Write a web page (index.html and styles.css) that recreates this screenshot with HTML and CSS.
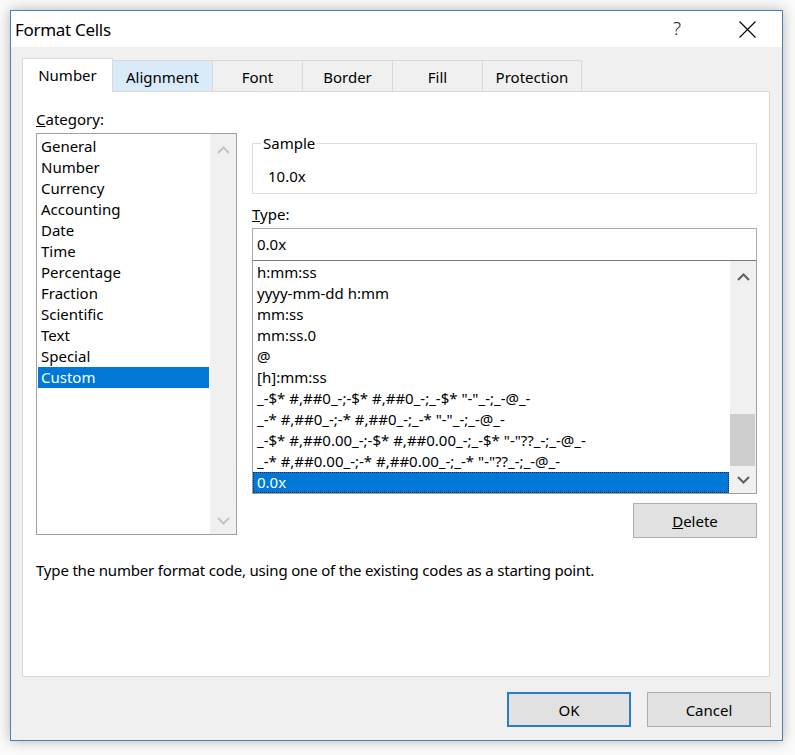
FILE: index.html
```html
<!DOCTYPE html>
<html>
<head>
<meta charset="utf-8">
<link rel="stylesheet" href="styles.css">
</head>
<body>
<div class="window">
  <div class="titlebar">
    <span class="title">Format Cells</span>
    <span class="help">?</span>
    <svg class="close" width="17" height="17" viewBox="0 0 17 17"><path d="M0.5 0.5 L16.5 16.5 M16.5 0.5 L0.5 16.5" stroke="#000" stroke-width="1.1" fill="none"/></svg>
  </div>
  <div class="body">
    <div class="tabs">
      <div class="tab selected w91">Number</div>
      <div class="tab hover w100">Alignment</div>
      <div class="tab w90">Font</div>
      <div class="tab w90">Border</div>
      <div class="tab w90">Fill</div>
      <div class="tab w99">Protection</div>
    </div>
    <div class="panel">
      <div class="toprow">
        <div class="leftcol">
          <div class="label"><u>C</u>ategory:</div>
          <div class="listbox catlist">
            <div class="items">
              <div class="row">General</div>
              <div class="row">Number</div>
              <div class="row">Currency</div>
              <div class="row">Accounting</div>
              <div class="row">Date</div>
              <div class="row">Time</div>
              <div class="row">Percentage</div>
              <div class="row">Fraction</div>
              <div class="row">Scientific</div>
              <div class="row">Text</div>
              <div class="row">Special</div>
              <div class="row sel">Custom</div>
            </div>
            <div class="scrollbar disabled">
              <div class="sbtn up"><svg width="13" height="8" viewBox="0 0 13 8"><path d="M1 7 L6.5 1.5 L12 7" /></svg></div>
              <div class="track"></div>
              <div class="sbtn down"><svg width="13" height="8" viewBox="0 0 13 8"><path d="M1 1 L6.5 6.5 L12 1" /></svg></div>
            </div>
          </div>
        </div>
        <div class="rightcol">
          <fieldset class="sample">
            <legend>Sample</legend>
            <div class="sampletext">10.0x</div>
          </fieldset>
          <div class="label typelabel"><u>T</u>ype:</div>
          <div class="input">0.0x</div>
          <div class="listbox typelist">
            <div class="items">
              <div class="row">h:mm:ss</div>
              <div class="row">yyyy-mm-dd h:mm</div>
              <div class="row">mm:ss</div>
              <div class="row">mm:ss.0</div>
              <div class="row">@</div>
              <div class="row">[h]:mm:ss</div>
              <div class="row">_-$* #,##0_-;-$* #,##0_-;_-$* "-"_-;_-@_-</div>
              <div class="row">_-* #,##0_-;-* #,##0_-;_-* "-"_-;_-@_-</div>
              <div class="row">_-$* #,##0.00_-;-$* #,##0.00_-;_-$* "-"??_-;_-@_-</div>
              <div class="row">_-* #,##0.00_-;-* #,##0.00_-;_-* "-"??_-;_-@_-</div>
              <div class="row sel focus">0.0x</div>
            </div>
            <div class="scrollbar">
              <div class="sbtn up"><svg width="13" height="8" viewBox="0 0 13 8"><path d="M1 7 L6.5 1.5 L12 7" /></svg></div>
              <div class="track"><div class="thumb"></div></div>
              <div class="sbtn down"><svg width="13" height="8" viewBox="0 0 13 8"><path d="M1 1 L6.5 6.5 L12 1" /></svg></div>
            </div>
          </div>
          <div class="btnrow">
            <div class="button delete"><u>D</u>elete</div>
          </div>
        </div>
      </div>
      <div class="desc">Type the number format code, using one of the existing codes as a starting point.</div>
    </div>
    <div class="footer">
      <div class="button ok">OK</div>
      <div class="button">Cancel</div>
    </div>
  </div>
</div>
</body>
</html>
```

FILE: styles.css
```css
* { box-sizing: border-box; }
html, body { margin: 0; padding: 0; background: #fafafa; }
body {
  font-family: "Noto Sans", "Open Sans", sans-serif;
  font-size: 15px;
  color: #000;
  width: 795px;
  height: 755px;
  overflow: hidden;
}
.window {
  margin: 10px 0 0 10px;
  width: 773px;
  height: 731px;
  border: 1px solid #4f7fad;
  background: #f0f0f0;
  box-shadow: 0 0 12px rgba(0,0,0,0.28);
  display: flex;
  flex-direction: column;
}
.titlebar {
  height: 36px;
  background: #fff;
  display: flex;
  align-items: center;
  padding-left: 4px;
}
.title { font-size: 17px; flex: 1; letter-spacing: -0.3px; padding-top: 1px; }
.help { font-size: 19px; font-weight: 300; color: #222; margin-right: 58px; margin-top: -2px; }
.close { margin-right: 26px; }
.body {
  flex: 1;
  padding: 11px 12px 0 11px;
  display: flex;
  flex-direction: column;
}
.tabs {
  display: flex;
  align-items: flex-end;
  height: 33px;
  position: relative;
  z-index: 2;
}
.tab {
  height: 31px;
  border-top: 1px solid #d9d9d9;
  border-right: 1px solid #d9d9d9;
  display: flex;
  align-items: center;
  justify-content: center;
  background: #f0f0f0;
  padding-top: 2px;
}
.tab.selected {
  height: 34px;
  margin-bottom: -1px;
  background: #fff;
  border-left: 1px solid #d9d9d9;
  padding-top: 0;
  padding-bottom: 1px;
}
.tab.hover { background: #d9eaf8; }
.w91 { width: 91px; }
.w90 { width: 90px; }
.w100 { width: 100px; }
.w99 { width: 99px; }
.panel {
  height: 586px;
  background: #fff;
  border: 1px solid #d9d9d9;
  padding: 17px 12px 0 13px;
  display: flex;
  flex-direction: column;
}
.toprow { display: flex; gap: 15px; }
.leftcol { width: 201px; }
.rightcol { width: 505px; }
.label { height: 20px; line-height: 20px; }
.listbox {
  display: flex;
  border: 1px solid #a0a0a0;
  background: #fff;
}
.catlist { margin-top: 4px; height: 402px; }
.items { flex: 1; padding: 1px 1px; min-width: 0; }
.catlist .items { padding-top: 2px; }
.row {
  height: 21px;
  line-height: 21px;
  padding-left: 3px;
  white-space: nowrap;
  overflow: hidden;
}
.row.sel { background: #0078d7; color: #fff; }
.row.focus { outline: 1px dotted #0c2f55; outline-offset: -1px; }
.scrollbar {
  width: 26px;
  background: #f0f0f0;
  display: flex;
  flex-direction: column;
}
.sbtn { display: flex; align-items: center; justify-content: center; }
.sbtn.up { height: 32px; }
.sbtn.down { height: 26px; }
.sbtn svg path { fill: none; stroke: #606060; stroke-width: 2; stroke-linejoin: miter; }
.scrollbar.disabled .sbtn svg path { stroke: #c4c4c4; }
.track { flex: 1; }
.thumb { margin-top: 121px; height: 52px; background: #cdcdcd; margin-right: 1px; }
.sample {
  margin: 25px 0 0 0;
  padding: 0;
  border: 1px solid #dcdcdc;
  min-inline-size: 0;
}
.sample legend {
  margin-left: 8px;
  padding: 0 2px;
  line-height: 18px;
  height: 18px;
}
.sampletext { padding: 14px 0 7px 15px; line-height: 20px; }
.typelabel { margin-top: 10px; }
.input {
  margin-top: 4px;
  height: 33px;
  border: 1px solid #acacac;
  border-bottom-color: #7a7a7a;
  padding-left: 4px;
  line-height: 30px;
}
.typelist {
  height: 233px;
  border-top: none;
  border-color: #a0a0a0;
}
.typelist .items { padding-top: 1px; padding-left: 0; }
.typelist .row { padding-left: 4px; }
.btnrow { display: flex; justify-content: flex-end; margin-top: 9px; }
.button {
  width: 124px;
  height: 35px;
  background: #e1e1e1;
  border: 1px solid #adadad;
  display: flex;
  align-items: center;
  justify-content: center;
}
.delete { width: 124px; }
.desc { margin-top: 22px; line-height: 20px; letter-spacing: -0.18px; }
.footer {
  display: flex;
  justify-content: flex-end;
  gap: 16px;
  padding-top: 15px;
  margin-right: -1px;
}
.ok { border: 2px solid #2a7cc7; }
```
